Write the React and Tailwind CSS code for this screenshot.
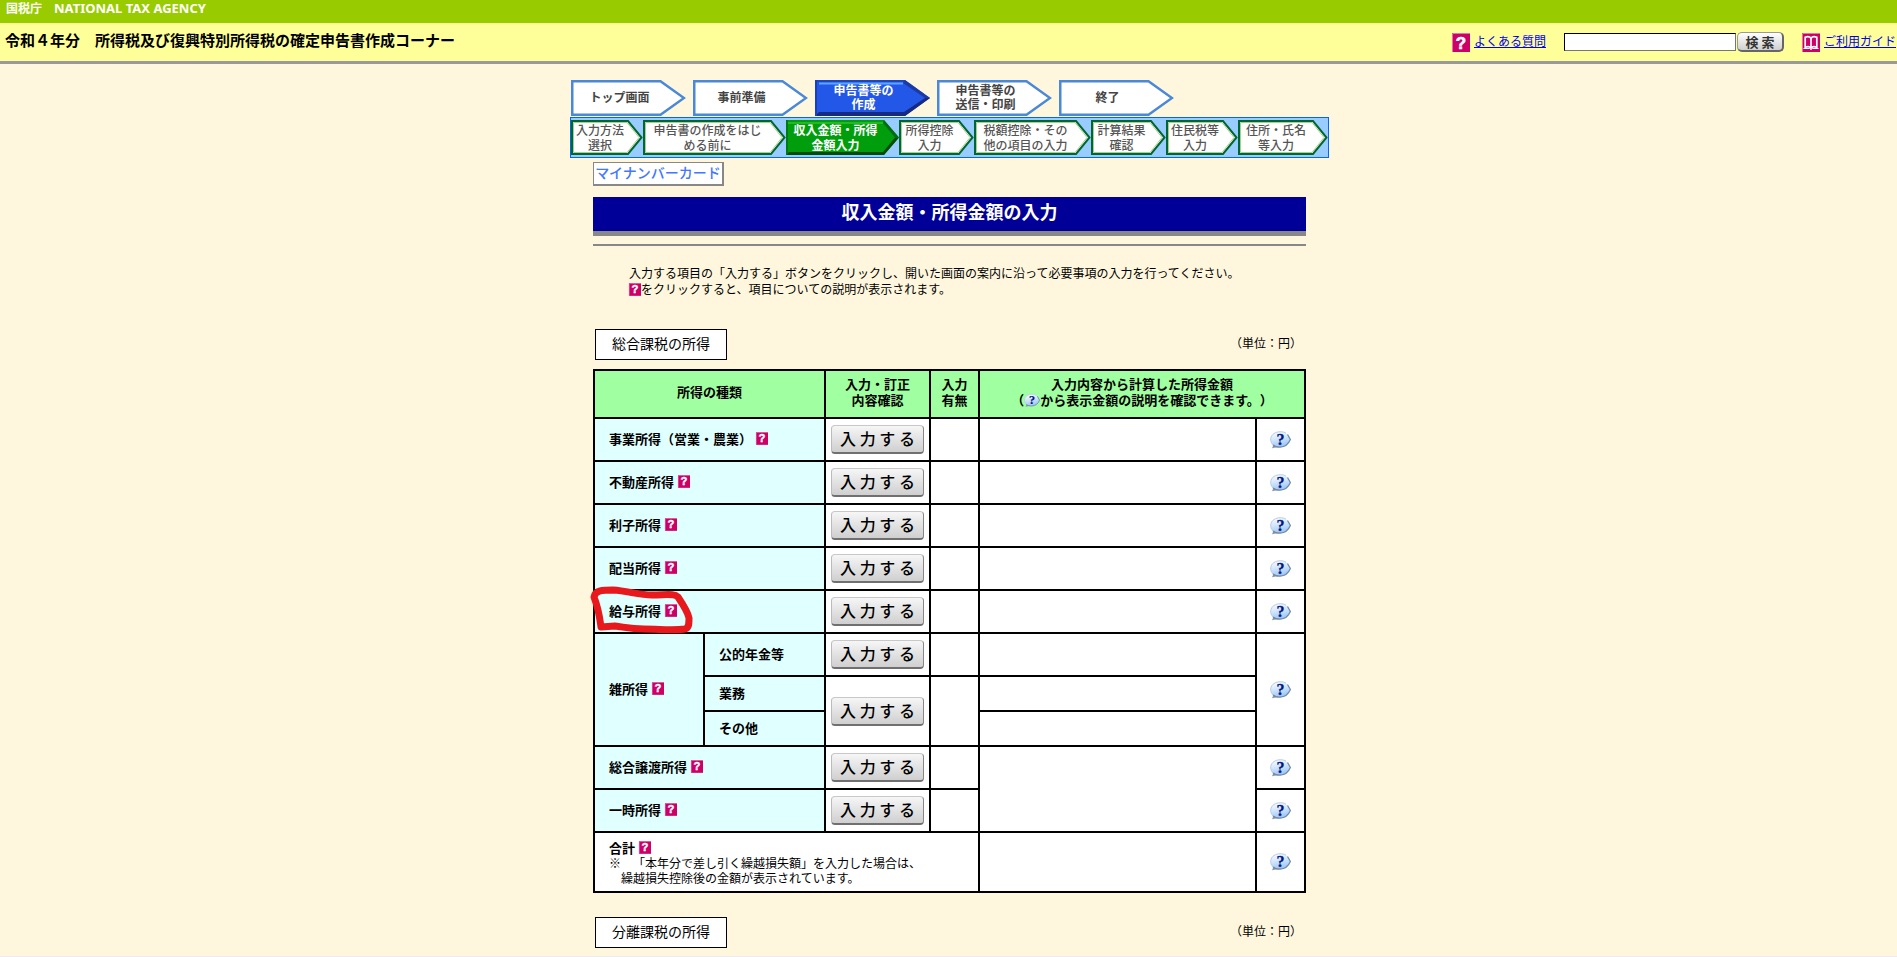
const MAIN_STEPS = [
  { lines: ['トップ画面'] },
  { lines: ['事前準備'] },
  { lines: ['申告書等の', '作成'], active: true },
  { lines: ['申告書等の', '送信・印刷'] },
  { lines: ['終了'] },
];

const SUB_STEPS = [
  { lines: ['入力方法', '選択'], w: 72, width: 'w-[72px]' },
  { lines: ['申告書の作成をはじ', 'める前に'], w: 143, width: 'w-[143px]' },
  { lines: ['収入金額・所得', '金額入力'], w: 113, width: 'w-[113px]', active: true },
  { lines: ['所得控除', '入力'], w: 75, width: 'w-[75px]' },
  { lines: ['税額控除・その', '他の項目の入力'], w: 117, width: 'w-[117px]' },
  { lines: ['計算結果', '確認'], w: 75, width: 'w-[75px]' },
  { lines: ['住民税等', '入力'], w: 72, width: 'w-[72px]' },
  { lines: ['住所・氏名', '等入力'], w: 90, width: 'w-[90px]' },
];

const SIMPLE_ROWS = ['事業所得（営業・農業）', '不動産所得', '利子所得', '配当所得', '給与所得'];

/* Pink square with a white question mark */
function HelpIcon({ className = 'w-3 h-[13px]' }) {
  return (
    <svg className={`shrink-0 overflow-visible ${className}`} viewBox="0 0 18 19" aria-hidden="true">
      <rect width="18" height="19" fill="#cc0066" />
      <path d="M0.5 19V0.5H18" fill="none" stroke="#e673a8" strokeWidth="1" />
      <text
        x="9"
        y="15.5"
        textAnchor="middle"
        fontFamily="Liberation Sans, sans-serif"
        fontWeight="bold"
        fontSize="17"
        fill="#fff"
        stroke="#fff"
        strokeWidth="0.6"
      >
        ?
      </text>
    </svg>
  );
}

function BookIcon() {
  return (
    <svg className="w-[18px] h-[19px] shrink-0" viewBox="0 0 18 19" aria-hidden="true">
      <rect width="18" height="19" fill="#cc0066" />
      <path d="M0.5 19V0.5H18" fill="none" stroke="#e673a8" strokeWidth="1" />
      <path
        d="M9 5.2C8 3.8 5.5 3.4 3.2 4.2V14.2C5.5 13.4 8 13.6 9 15C10 13.6 12.5 13.4 14.8 14.2V4.2C12.5 3.4 10 3.8 9 5.2Z"
        fill="#cc0066"
        stroke="#fff"
        strokeWidth="1.7"
      />
      <path d="M9 5V15" stroke="#fff" strokeWidth="1.7" />
      <path d="M1.5 15.5H7.5L9 16.5L10.5 15.5H16.5" fill="none" stroke="#fff" strokeWidth="1" />
    </svg>
  );
}

/* Blue speech bubble used next to calculated amounts */
function BubbleIcon({ className = 'w-[21px] h-[18px]' }) {
  return (
    <svg className={`shrink-0 overflow-visible ${className}`} viewBox="0 0 21 18" aria-hidden="true">
      <defs>
        <linearGradient id="bubble" x1="0" y1="0" x2="0.3" y2="1">
          <stop offset="0" stopColor="#fff" />
          <stop offset="0.5" stopColor="#d3e7fd" />
          <stop offset="1" stopColor="#9cc8f8" />
        </linearGradient>
      </defs>
      <path d="M4 13L2 17.2L8 16Z" fill="#8796a8" />
      <path
        d="M10 0.7C15 0.4 18 2.5 20.5 8.5C18 14.5 15 16.2 10 16.2C4.5 16.2 0.7 13 0.7 8.5C0.7 4 4.5 0.9 10 0.7Z"
        fill="url(#bubble)"
      />
      <path d="M17.5 3.5L20.4 8.5C18.5 13 16 15.8 10 16.2C7 16.2 4.5 15.5 3 14" fill="none" stroke="#7589a5" strokeWidth="1.2" />
      <path d="M3 14C-0.5 10.5 0 5 4 2.5C7.5 0.2 13 0.2 16 2.2" fill="none" stroke="#b9cbe0" strokeWidth="1" />
      <text
        x="10.5"
        y="13.5"
        textAnchor="middle"
        fontFamily="Liberation Serif, serif"
        fontWeight="bold"
        fontSize="16"
        fill="#00187e"
        stroke="#00187e"
        strokeWidth="0.3"
      >
        ?
      </text>
    </svg>
  );
}

function MainStep({ lines, active }) {
  return (
    <li className="relative w-[115px] h-9 pr-[18px] pb-0.5 flex items-center justify-center">
      <svg className="absolute inset-0 w-full h-full" viewBox="0 0 115 36" aria-hidden="true">
        {active ? (
          <>
            <path d="M0 0H90L115 18L90 36H0Z" fill="#2357e8" />
            <path d="M0 36L4 32H89L110 18L115 18L90 36Z" fill="#152a80" />
            <path d="M90 0L115 18H110L88 3Z" fill="#1b3aa5" />
            <path d="M1 0V36" stroke="#1a3fb8" strokeWidth="2" />
            <path d="M0 1H90" stroke="#1c3fb5" strokeWidth="1.5" />
            <path d="M4 3.5H88" stroke="#5aa9ff" strokeWidth="2" />
          </>
        ) : (
          <path d="M1.25 1.25H89.5L113 18L89.5 34.75H1.25Z" fill="#fff" stroke="#4a88d8" strokeWidth="2.5" />
        )}
      </svg>
      <span
        className={`relative text-center text-[12px] leading-[14px] font-bold ${active ? 'text-white' : 'text-[#444]'}`}
      >
        {lines.map((line) => (
          <span key={line} className="block whitespace-nowrap">
            {line}
          </span>
        ))}
      </span>
    </li>
  );
}

function SubStep({ lines, w, width, active }) {
  const s = w - 15;
  return (
    <li className={`relative h-[35px] pr-[14px] pb-0.5 flex items-center justify-center ${width}`}>
      <svg className="absolute inset-0 w-full h-full" viewBox={`0 0 ${w} 35`} aria-hidden="true">
        {active ? (
          <>
            <path d={`M0 0H${s}L${w} 17.5L${s} 35H0Z`} fill="#009e0c" />
            <path d={`M0 35L3 32H${s - 1}L${w - 4} 17.5H${w}L${s} 35Z`} fill="#004d0a" />
            <path d={`M${s} 0L${w} 17.5H${w - 4}L${s - 1} 3Z`} fill="#006b12" />
            <path d="M1 0V34" stroke="#007a10" strokeWidth="2" />
            <path d={`M2 3H${s - 1}`} stroke="#2fc22f" strokeWidth="1.5" />
          </>
        ) : (
          <>
            <path d={`M1 1H${s}L${w - 1.5} 17.5L${s} 34H1Z`} fill="#fff" stroke="#006633" strokeWidth="2" />
            <path d={`M2.5 2.5H${s - 1}L${w - 4} 17.5L${s - 1} 32.5H2.5Z`} fill="#fff" stroke="#a5d28a" strokeWidth="1" />
          </>
        )}
      </svg>
      <span
        className={`relative text-center text-[12px] leading-[15px] ${active ? 'font-bold text-white' : 'font-medium text-[#555]'}`}
      >
        {lines.map((line) => (
          <span key={line} className="block whitespace-nowrap">
            {line}
          </span>
        ))}
      </span>
    </li>
  );
}

function EnterButton({ label }) {
  return (
    <button
      type="button"
      aria-label={`${label} 入力する`}
      className="block mx-auto w-[93px] h-[29px] rounded-[4px] border border-t-[#c8c8c8] border-l-[#bbb] border-r-[#888] border-b-2 border-b-[#707070] bg-linear-to-b from-[#f6f6f6] to-[#cfcfcf] pb-0.5 text-[16px] leading-[24px] font-medium text-black whitespace-nowrap"
    >
      入 力 す る
    </button>
  );
}

function HelpLink() {
  return (
    <a href="#help" aria-label="項目の説明">
      <HelpIcon />
    </a>
  );
}

function LabelCell({ label, children, help = true, ...rest }) {
  return (
    <th scope="row" className="relative border-2 border-black bg-[#e0ffff] pl-[14px] pb-0.5 text-left font-bold" {...rest}>
      <span className="flex items-center gap-1 whitespace-nowrap">
        {label}
        {help && <HelpLink />}
      </span>
      {children}
    </th>
  );
}

function Cell({ children, ...rest }) {
  return (
    <td className="border-2 border-black bg-white" {...rest}>
      {children}
    </td>
  );
}

function BubbleCell(props) {
  return (
    <Cell {...props}>
      <a href="#amount" aria-label="表示金額の説明" className="flex justify-center">
        <BubbleIcon />
      </a>
    </Cell>
  );
}

/* Hand-drawn marker around 給与所得 */
function Marker() {
  return (
    <svg
      className="absolute z-10 -left-2 -top-2.5 w-[112px] h-14 pointer-events-none"
      viewBox="0 0 112 56"
      aria-hidden="true"
    >
      <path
        d="M7 16C8 9 16 9 26 9C41 10 52 14 65 14C79 14 87 12 91 16C95 22 101 31 102 37C102 43 102 47 98 48C85 50 73 48 57 48C43 48 37 46 28 45L14 46C13 39 12 29 7 16Z"
        fill="none"
        stroke="#e8191c"
        strokeWidth="7"
        strokeLinecap="round"
        strokeLinejoin="round"
      />
    </svg>
  );
}

function SectionHeading({ title }) {
  return (
    <div className="flex items-start justify-between pl-0.5 pr-1">
      <h2 className="w-[132px] h-[31px] border border-black bg-white text-center text-[14px] leading-[26px]">
        {title}
      </h2>
      <span className="text-[12px] leading-[28px]">（単位：円）</span>
    </div>
  );
}

function Header() {
  return (
    <header>
      <div className="h-[23px] bg-[#99cc00] pl-1.5 text-[12px] leading-[16px] font-bold text-white">
        国税庁　<span className="font-['Noto_Sans'] text-[13px]">NATIONAL TAX AGENCY</span>
      </div>
      <div className="h-[41px] bg-[#ffff99] border-b-3 border-[#999] pl-[5px] flex items-center justify-between">
        <h1 className="text-[15px] leading-[20px] font-bold pb-1">
          令和４年分　所得税及び復興特別所得税の確定申告書作成コーナー
        </h1>
        <div className="flex items-center text-[12px] text-[#0000ee]">
          <HelpIcon className="w-[18px] h-[19px]" />
          <a href="#faq" className="ml-1 pb-0.5 underline leading-[18px]">
            よくある質問
          </a>
          <form className="ml-[18px] flex items-center gap-px" onSubmit={(e) => e.preventDefault()}>
            <input
              type="text"
              aria-label="検索"
              className="w-[172px] h-[18px] border border-[#767676] border-t-black border-l-black bg-white px-1 text-black"
            />
            <button
              type="submit"
              className="w-[47px] h-5 rounded-[5px] border border-[#999] border-r-2 border-b-2 border-r-[#666] border-b-[#666] bg-linear-to-b from-white to-[#cfcfcf] text-[13px] leading-[16px] font-bold text-[#333] whitespace-nowrap"
            >
              検 索
            </button>
          </form>
          <span className="ml-[18px] flex items-center">
            <BookIcon />
            <a href="#guide" className="ml-1 pb-0.5 underline leading-[18px] pr-px">
              ご利用ガイド
            </a>
          </span>
        </div>
      </div>
    </header>
  );
}

function IncomeTable() {
  return (
    <table className="mt-[9px] w-full table-fixed border-collapse text-[13px] leading-[15px]">
      <colgroup>
        <col className="w-[110px]" />
        <col className="w-[121px]" />
        <col className="w-[105px]" />
        <col className="w-[49px]" />
        <col />
        <col className="w-[49px]" />
      </colgroup>
      <thead>
        <tr className="h-12 bg-[#a0ffa0] leading-[16px]">
          <th scope="col" colSpan={2} className="border-2 border-black pb-1">
            所得の種類
          </th>
          <th scope="col" className="border-2 border-black pb-1">
            入力・訂正
            <br />
            内容確認
          </th>
          <th scope="col" className="border-2 border-black pb-1">
            入力
            <br />
            有無
          </th>
          <th scope="col" colSpan={2} className="border-2 border-black pb-1">
            入力内容から計算した所得金額
            <span className="flex items-center justify-center whitespace-nowrap">
              （<BubbleIcon className="w-4 h-[15px]" />
              から表示金額の説明を確認できます。）
            </span>
          </th>
        </tr>
      </thead>
      <tbody>
        {SIMPLE_ROWS.map((label) => (
          <tr key={label} className="h-[43px]">
            <LabelCell label={label} colSpan={2}>
              {label === '給与所得' && <Marker />}
            </LabelCell>
            <Cell>
              <EnterButton label={label} />
            </Cell>
            <Cell />
            <Cell />
            <BubbleCell />
          </tr>
        ))}

        {/* 雑所得 */}
        <tr className="h-[43px]">
          <LabelCell label="雑所得" rowSpan={3} />
          <LabelCell label="公的年金等" help={false} />
          <Cell>
            <EnterButton label="公的年金等" />
          </Cell>
          <Cell />
          <Cell />
          <BubbleCell rowSpan={3} />
        </tr>
        <tr className="h-[35px]">
          <LabelCell label="業務" help={false} />
          <Cell rowSpan={2}>
            <EnterButton label="業務・その他" />
          </Cell>
          <Cell rowSpan={2} />
          <Cell />
        </tr>
        <tr className="h-[35px]">
          <LabelCell label="その他" help={false} />
          <Cell />
        </tr>

        <tr className="h-[43px]">
          <LabelCell label="総合譲渡所得" colSpan={2} />
          <Cell>
            <EnterButton label="総合譲渡所得" />
          </Cell>
          <Cell />
          <Cell rowSpan={2} />
          <BubbleCell />
        </tr>
        <tr className="h-[43px]">
          <LabelCell label="一時所得" colSpan={2} />
          <Cell>
            <EnterButton label="一時所得" />
          </Cell>
          <Cell />
          <BubbleCell />
        </tr>

        {/* 合計 */}
        <tr className="h-[60px]">
          <td colSpan={4} className="border-2 border-black bg-white pl-[14px]">
            <span className="flex items-center gap-1 font-bold">
              合計
              <HelpLink />
            </span>
            <p className="text-[12px]">
              {'※　「本年分で差し引く繰越損失額」を入力した場合は、'}
              <br />
              {'　繰越損失控除後の金額が表示されています。'}
            </p>
          </td>
          <Cell />
          <BubbleCell />
        </tr>
      </tbody>
    </table>
  );
}

export default function App() {
  return (
    <div
      lang="ja"
      className="min-h-screen border-b border-[#ececf0] bg-[#fff7dd] font-['Noto_Sans_CJK_JP',sans-serif] text-black [text-spacing-trim:space-all]"
    >
      <Header />

      <main className="mx-auto w-[761px] pl-0.5 pt-4 pb-2">
        <nav aria-label="作成の流れ">
          <ol className="flex gap-[7px] pl-px">
            {MAIN_STEPS.map((step, i) => (
              <MainStep key={i} {...step} />
            ))}
          </ol>
          <ol className="mt-px h-[41px] flex items-center border border-[#0066ff] bg-[#99ccff]">
            {SUB_STEPS.map((step, i) => (
              <SubStep key={i} {...step} />
            ))}
          </ol>
        </nav>

        <div className="mx-[23px]">
          <a
            href="#card"
            className="mt-1 block w-[131px] h-6 border border-[#888] border-r-2 border-b-2 bg-white text-center text-[14px] leading-[18px] font-medium text-[#4477ff] whitespace-nowrap"
          >
            マイナンバーカード
          </a>

          <h2 className="mt-[11px] h-[39px] border-b-5 border-[#888] bg-[#000099] text-center text-[18px] leading-[28px] font-bold text-white">
            収入金額・所得金額の入力
          </h2>
          <hr className="mt-2 border-t-2 border-[#888]" />

          <div className="mt-[19px] px-9 text-[12px] leading-[16px]">
            <p>
              入力する項目の「入力する」ボタンをクリックし、開いた画面の案内に沿って必要事項の入力を行ってください。
            </p>
            <p className="flex items-center">
              <HelpIcon />
              をクリックすると、項目についての説明が表示されます。
            </p>
          </div>

          <div className="mt-8">
            <SectionHeading title="総合課税の所得" />
            <IncomeTable />
          </div>
          <div className="mt-6">
            <SectionHeading title="分離課税の所得" />
          </div>
        </div>
      </main>
    </div>
  );
}
